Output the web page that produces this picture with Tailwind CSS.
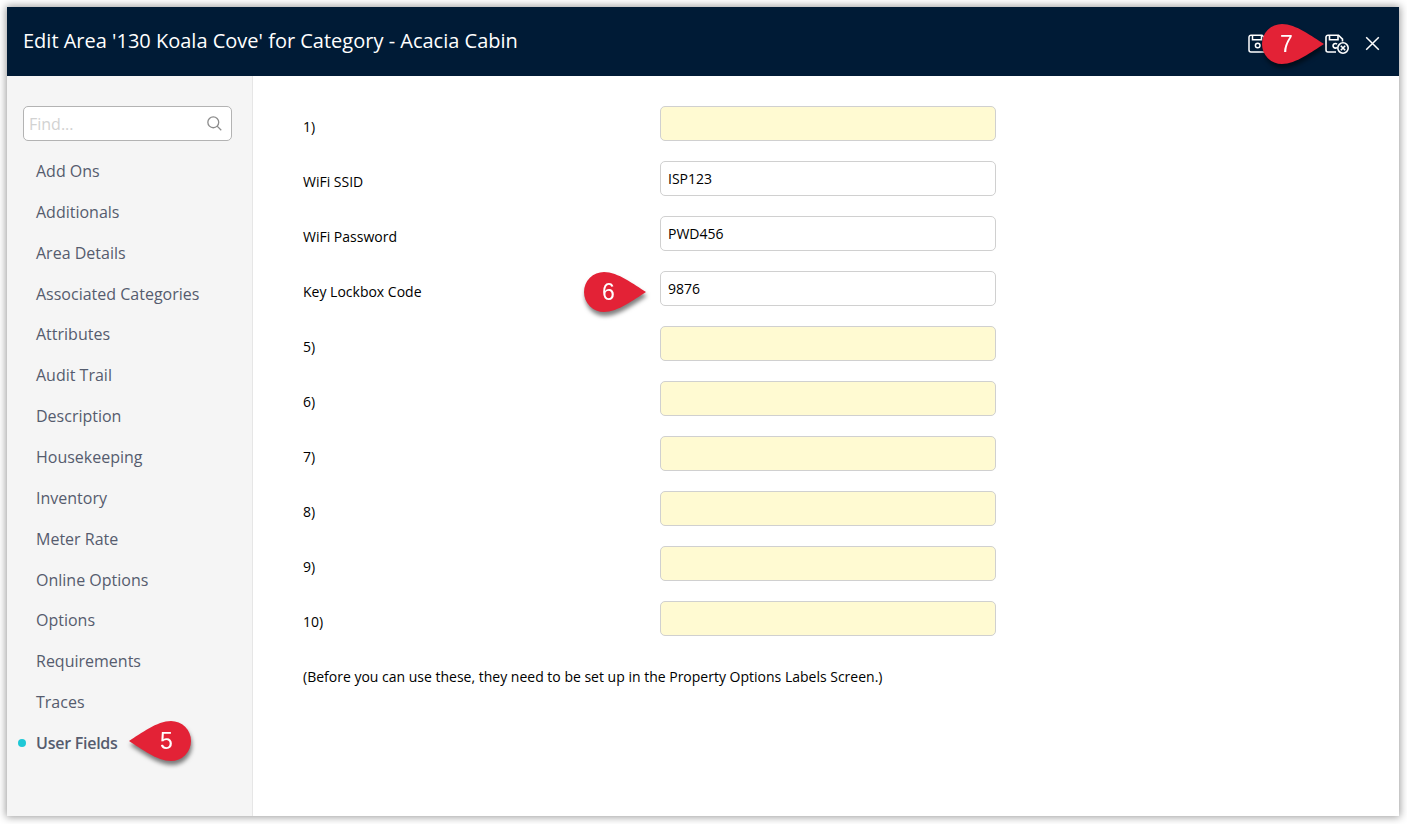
<!DOCTYPE html>
<html lang="en">
<head>
    <meta charset="UTF-8">
    <meta name="viewport" content="width=device-width, initial-scale=1.0">
    <title>Edit Area</title>
    <script src="https://cdn.jsdelivr.net/npm/@tailwindcss/browser@4"></script>
</head>
<body class="bg-white h-screen overflow-hidden pt-[7px] pl-[7px] pr-2 pb-2 font-['Open_Sans','Noto_Sans',sans-serif]">

    <!-- Dialog window -->
    <div class="h-full flex flex-col bg-white shadow-[0_0_8px_1px_rgba(0,0,0,0.4)]">

        <!-- Header -->
        <header class="h-[69px] shrink-0 bg-[#001b36] text-white flex items-center justify-between pl-4 pr-[19px]">
            <h1 class="text-[20px] leading-7 pb-[1px]">Edit Area '130 Koala Cove' for Category - Acacia Cabin</h1>
            <div class="flex items-center pt-1">
                <div class="relative mr-[57px]">
                    <svg width="20" height="20" viewBox="0 0 20 20" fill="none" stroke="currentColor" stroke-width="1.5">
                        <path d="M3 1.2h11l4.2 4.2V16a2 2 0 0 1-2 2H3a2 2 0 0 1-2-2V3.2a2 2 0 0 1 2-2z"/>
                        <path d="M4.5 1.2v4.5h9V1.2"/>
                        <circle cx="9.7" cy="11.5" r="2.3"/>
                    </svg>
                    <!-- Step 7 -->
                    <div class="absolute left-[14px] -top-[10px] w-[62px] h-10 drop-shadow-[1px_4px_2px_rgba(0,0,0,0.5)]">
                        <svg class="absolute inset-0" width="62" height="40" viewBox="0 0 62 40"><path fill="#e32236" d="M62 20C50 12.5 34 0 20 0a20 20 0 0 0 0 40C34 40 50 27.5 62 20z"/></svg>
                        <span class="absolute left-0 top-0 w-[49px] text-center text-[23px] leading-[41px] font-['Liberation_Sans',sans-serif]">7</span>
                    </div>
                </div>
                <svg class="mr-4" width="24" height="20" viewBox="0 0 24 20" fill="none" stroke="currentColor" stroke-width="1.6">
                    <path d="M11 18H3a2 2 0 0 1-2-2V3.2a2 2 0 0 1 2-2h10.5l4 4V7.500"/>
                    <path d="M4.5 1.2v4.500h8.500V1.2"/>
                    <path d="M12 10.200a2.300 2.300 0 1 0 0 3.200"/>
                    <circle cx="18" cy="14" r="5.200"/>
                    <path d="M15.800 11.800l4.400 4.400M20.200 11.800l-4.400 4.400"/>
                </svg>
                <svg width="15" height="15" viewBox="0 0 15 15" fill="none" stroke="currentColor" stroke-width="1.5">
                    <path d="M1.2 1.2l12.6 12.6M13.8 1.2L1.2 13.8"/>
                </svg>
            </div>
        </header>

        <div class="flex flex-1 min-h-0">

            <!-- Side menu -->
            <aside class="w-[246px] shrink-0 bg-[#f5f5f5] border-r border-[#e6e6e6] pt-[30px]">
                <div class="ml-4 w-[209px] h-[35px] bg-white border border-[#b3b3b3] rounded-[5px] flex items-center justify-between pl-[5px] pr-[9px]">
                    <span class="text-base text-[#d2d2d2]">Find...</span>
                    <svg width="15" height="15" viewBox="0 0 16 16" fill="none" stroke="#8c8c8c" stroke-width="1.4">
                        <circle cx="6.7" cy="6.7" r="5.8"/>
                        <path d="M10.8 10.8l4.4 4.4"/>
                    </svg>
                </div>
                <nav id="menu" class="mt-[9.6px] text-base text-[#555c6e]"></nav>
            </aside>

            <!-- User fields -->
            <main class="flex-1 pt-[30px] pl-[50px] text-sm text-black">
                <div id="fields" class="flex flex-col gap-5"></div>
                <p class="mt-[30px] leading-[22px]">(Before you can use these, they need to be set up in the Property Options Labels Screen.)</p>
            </main>
        </div>
    </div>

    <template id="marker5">
        <div class="absolute left-[122px] -top-[1.5px] w-[62px] h-10 drop-shadow-[1px_4px_2px_rgba(0,0,0,0.5)] text-white">
            <svg class="absolute inset-0" width="62" height="40" viewBox="0 0 62 40"><path fill="#e32236" d="M0 20C12 12.5 28 0 42 0a20 20 0 0 1 0 40C28 40 12 27.5 0 20z"/></svg>
            <span class="absolute right-0 top-0 w-[49px] text-center text-[23px] leading-[41px] font-['Liberation_Sans',sans-serif]">5</span>
        </div>
    </template>

    <template id="marker6">
        <div class="absolute left-[281px] top-[1px] w-[62px] h-10 drop-shadow-[1px_4px_2px_rgba(0,0,0,0.5)] text-white">
            <svg class="absolute inset-0" width="62" height="40" viewBox="0 0 62 40"><path fill="#e32236" d="M62 20C50 12.5 34 0 20 0a20 20 0 0 0 0 40C34 40 50 27.5 62 20z"/></svg>
            <span class="absolute left-0 top-0 w-[49px] text-center text-[23px] leading-[41px] font-['Liberation_Sans',sans-serif]">6</span>
        </div>
    </template>

    <script>
        const menuItems = ['Add Ons', 'Additionals', 'Area Details', 'Associated Categories', 'Attributes', 'Audit Trail',
            'Description', 'Housekeeping', 'Inventory', 'Meter Rate', 'Online Options', 'Options', 'Requirements', 'Traces', 'User Fields'];
        const fields = [['1)', ''], ['WiFi SSID', 'ISP123'], ['WiFi Password', 'PWD456'], ['Key Lockbox Code', '9876'],
            ['5)', ''], ['6)', ''], ['7)', ''], ['8)', ''], ['9)', ''], ['10)', '']];

        const menu = document.getElementById('menu');
        menuItems.forEach((name) => {
            const active = name === 'User Fields';
            const item = document.createElement('div');
            item.className = 'relative h-[40.86px] pl-[11px] flex items-center';
            item.innerHTML = `
                <span class="size-2 rounded-full mr-[10px] ${active ? 'bg-[#1fc8d6]' : ''}"></span>
                <span class="${active ? 'font-semibold tracking-[-0.25px]' : ''}">${name}</span>`;
            if (active) item.append(document.getElementById('marker5').content);
            menu.appendChild(item);
        });

        const list = document.getElementById('fields');
        fields.forEach(([label, value]) => {
            const row = document.createElement('div');
            row.className = 'relative flex h-[35px]';
            row.innerHTML = `
                <label class="w-[357px] pt-[10px] leading-[22px]">${label}</label>
                <div class="w-[336px] border border-[#d0d0d0] rounded-[5px] px-[7px] leading-[34px] ${value ? 'bg-white' : 'bg-[#fffad2]'}">${value}</div>`;
            if (value === '9876') row.append(document.getElementById('marker6').content);
            list.appendChild(row);
        });
    </script>

</body>
</html>
